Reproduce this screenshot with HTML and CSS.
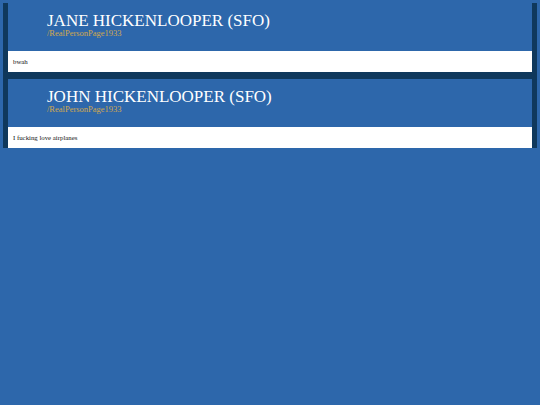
FILE: index.html
```html
<!DOCTYPE html>
<html>
<head>
<meta charset="utf-8">
<link rel="stylesheet" href="styles.css">
</head>
<body>
<div class="feed">
  <div class="post">
    <div class="post-head">
      <div class="name">JANE HICKENLOOPER (SFO)</div>
      <div class="handle">/RealPersonPage1933</div>
    </div>
    <div class="post-body">bwah</div>
  </div>
  <div class="post">
    <div class="post-head">
      <div class="name">JOHN HICKENLOOPER (SFO)</div>
      <div class="handle">/RealPersonPage1933</div>
    </div>
    <div class="post-body">I fucking love airplanes</div>
  </div>
</div>
</body>
</html>
```
FILE: styles.css
```css
html, body {
  margin: 0;
  padding: 0;
  background: #2d67ab;
  font-family: "Liberation Serif", "Times New Roman", serif;
}
body {
  padding: 3px 3px 0 3px;
}
.feed {
  background: #0f385c;
  padding: 0 5px;
  display: flex;
  flex-direction: column;
  gap: 7px;
}
.post {
  display: flex;
  flex-direction: column;
}
.post-head {
  background: #2d67ab;
  height: 48px;
  box-sizing: border-box;
  padding: 9px 0 0 39px;
}
.name {
  color: #ffffff;
  font-size: 17px;
  line-height: 17px;
}
.handle {
  color: #d2a84e;
  font-size: 8.5px;
  line-height: 8px;
}
.post-body {
  background: #ffffff;
  height: 21px;
  box-sizing: border-box;
  padding: 0 5px;
  font-size: 6.8px;
  line-height: 21px;
  color: #111;
}
```
